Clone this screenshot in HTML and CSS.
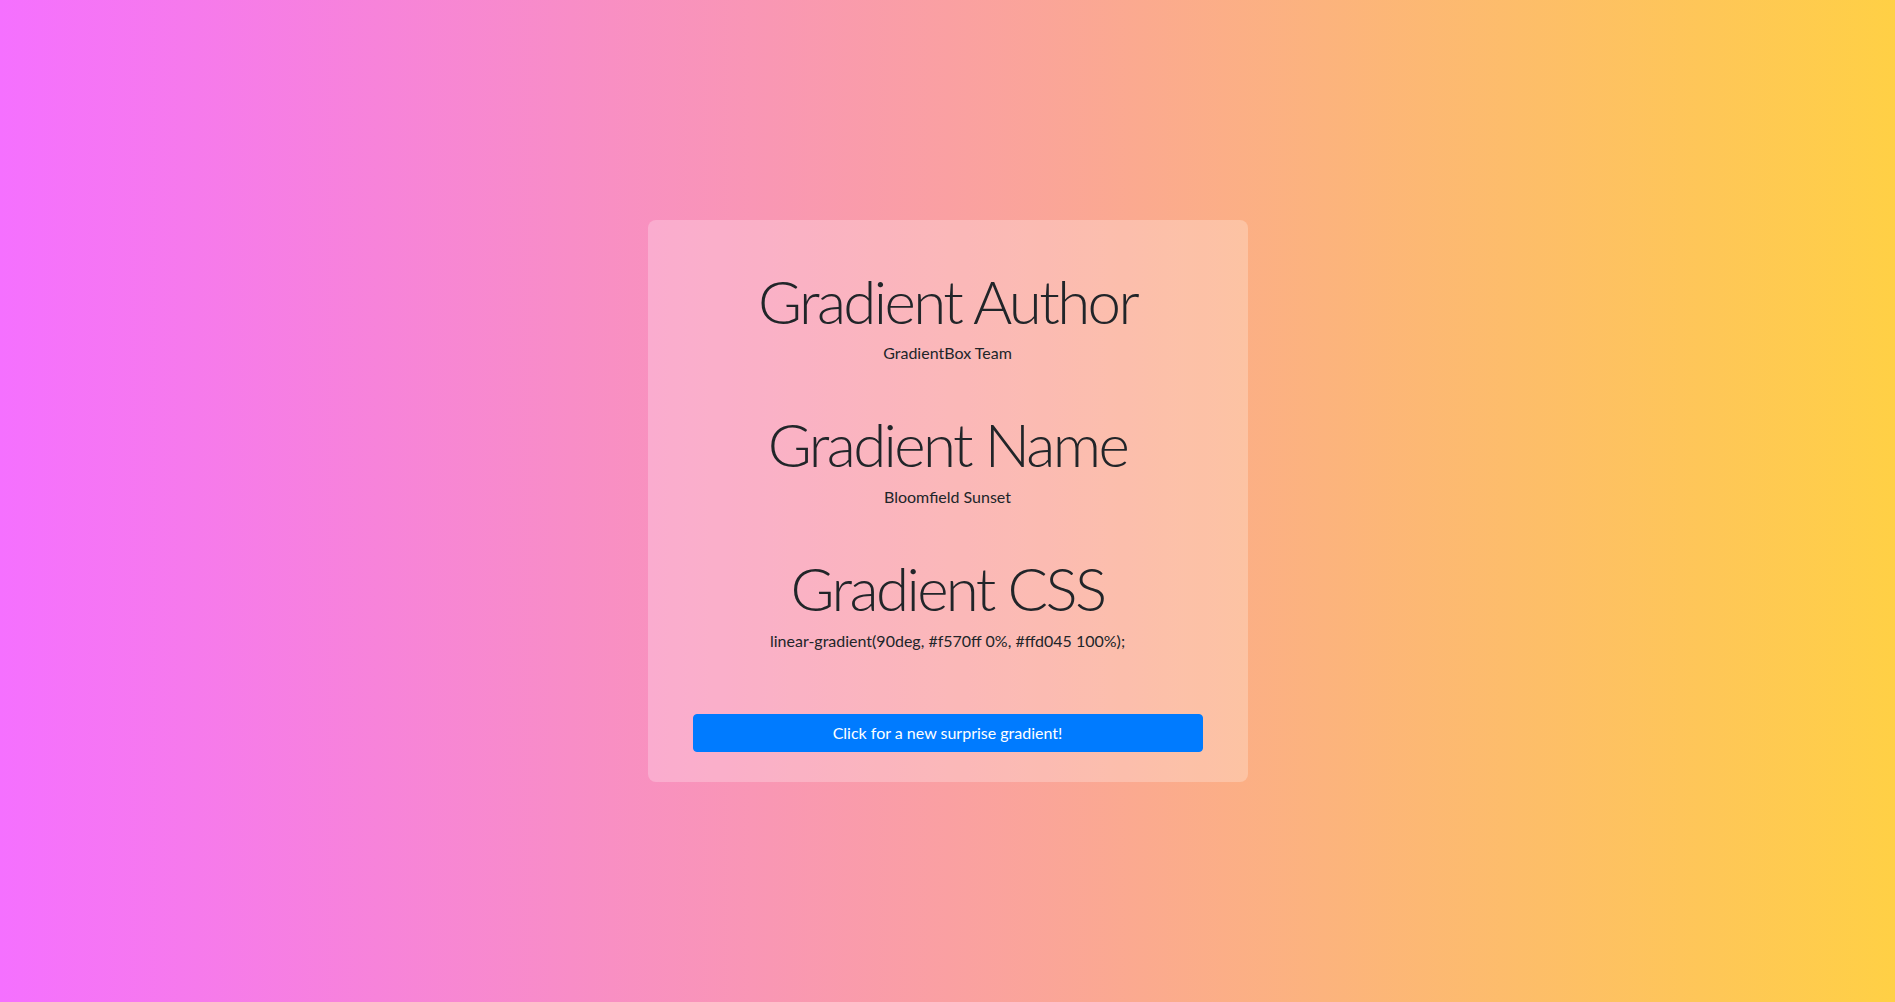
FILE: index.html
```html
<!DOCTYPE html>
<html lang="en">
<head>
<meta charset="utf-8">
<title>Gradient Box</title>
<link rel="stylesheet" href="styles.css">
</head>
<body>
<main class="card">
  <section class="block">
    <h1 class="title">Gradient Author</h1>
    <p class="value">GradientBox Team</p>
  </section>
  <section class="block">
    <h1 class="title">Gradient Name</h1>
    <p class="value">Bloomfield Sunset</p>
  </section>
  <section class="block">
    <h1 class="title">Gradient CSS</h1>
    <p class="value">linear-gradient(90deg, #f570ff 0%, #ffd045 100%);</p>
  </section>
  <button class="btn" type="button">Click for a new surprise gradient!</button>
</main>
</body>
</html>
```
FILE: styles.css
```css
html, body {
  margin: 0;
  padding: 0;
}
body {
  min-height: 100vh;
  display: flex;
  align-items: center;
  justify-content: center;
  background: linear-gradient(90deg, #f570ff 0%, #ffd045 100%);
  font-family: "Lato", "Open Sans", sans-serif;
  color: #212529;
  font-size: 16px;
  line-height: 24px;
}
.card {
  width: 600px;
  box-sizing: border-box;
  padding: 42.5px 45px 30px;
  background: rgba(255, 255, 255, 0.25);
  border-radius: 8px;
  display: flex;
  flex-direction: column;
  text-align: center;
}
.block {
  margin-bottom: 41px;
}
.block:last-of-type {
  margin-bottom: 61px;
}
.title {
  margin: 0;
  font-size: 60px;
  font-weight: 300;
  line-height: 76.8px;
  letter-spacing: -2.6px;
}
.value {
  margin: 2px 0 0;
  font-size: 16px;
  line-height: 24px;
}
.btn {
  display: block;
  width: 100%;
  height: 38px;
  padding: 6px 12px;
  border: 1px solid #007bff;
  border-radius: 4px;
  background: #007bff;
  color: #fff;
  font-family: inherit;
  font-size: 16px;
  line-height: 24px;
  cursor: pointer;
}
```
